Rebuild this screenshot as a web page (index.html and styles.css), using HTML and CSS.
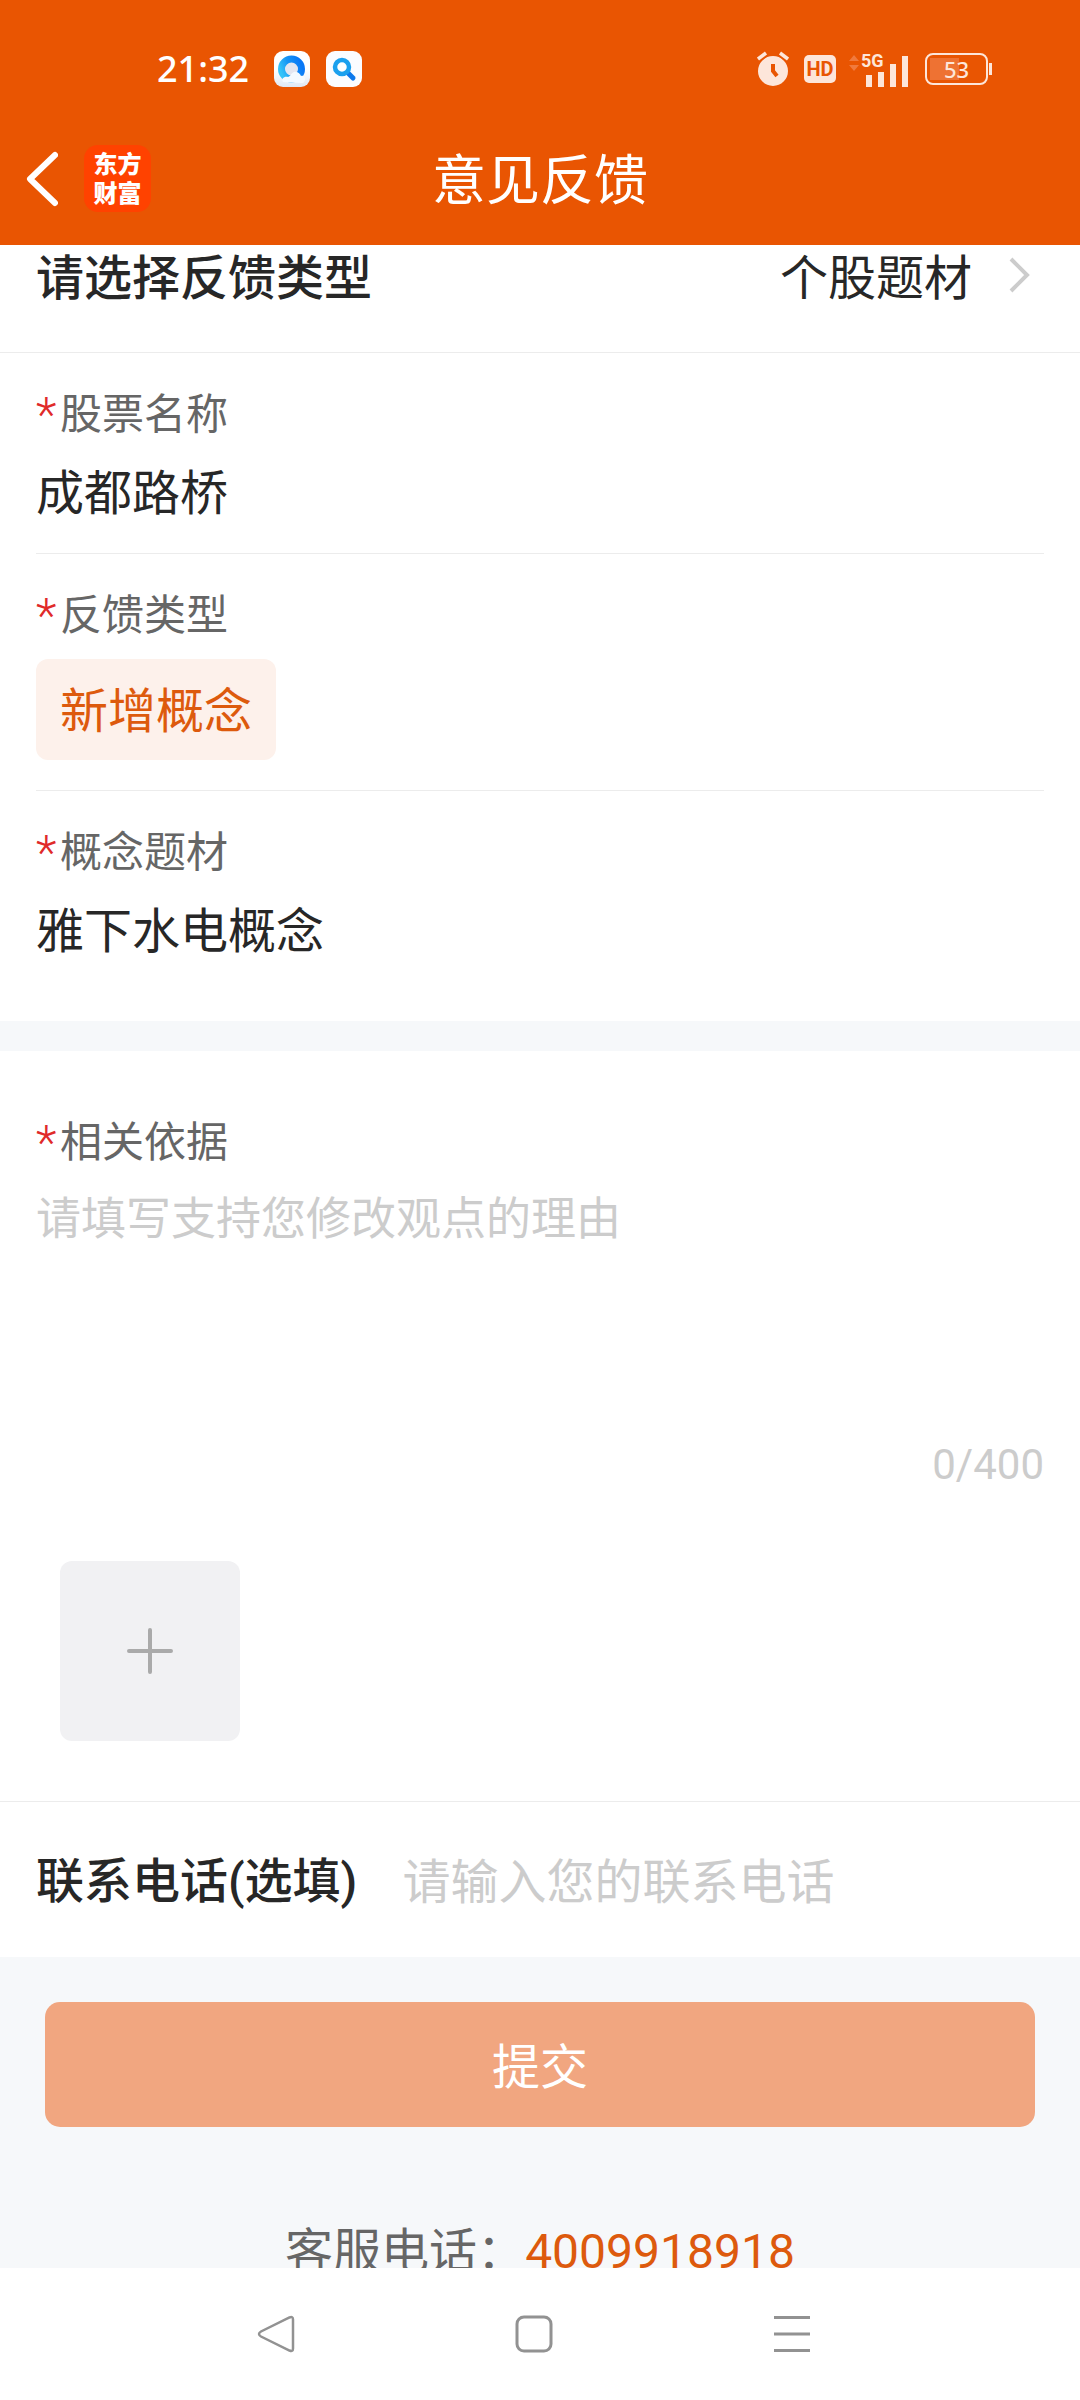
FILE: index.html
```html
<!DOCTYPE html>
<html lang="zh-CN">
<head>
<meta charset="utf-8">
<meta name="viewport" content="width=device-width, initial-scale=1">
<title>意见反馈</title>
<link rel="stylesheet" href="styles.css">
</head>
<body>
<div class="app">
  <header class="header">
    <div class="status">
      <div class="status-left">
        <span class="clock">21:32</span>
        <svg width="36" height="36" viewBox="0 0 36 36" aria-hidden="true">
          <defs>
            <linearGradient id="ring" x1="0" y1="0.7" x2="1" y2="0.3"><stop offset="0" stop-color="#35c3f8"/><stop offset="0.45" stop-color="#1796f5"/><stop offset="1" stop-color="#0a78f6"/></linearGradient>
            <linearGradient id="tile" x1="0" y1="0" x2="0" y2="1"><stop offset="0.5" stop-color="#fff"/><stop offset="1" stop-color="#dfe8f4"/></linearGradient>
          </defs>
          <rect width="36" height="36" rx="9" fill="url(#tile)"/>
          <circle cx="17.500" cy="18" r="10" fill="#e4e6f0" stroke="url(#ring)" stroke-width="7"/>
          <path d="M9 31c-2-3 1-6 5-5 2 0 3-4 6-5 4-1 6 2 7 4 3-1 4 1 4 3s-1 4-3 4z" fill="#f4faff"/>
        </svg>
        <svg width="36" height="36" viewBox="0 0 36 36" aria-hidden="true">
          <rect width="36" height="36" rx="9" fill="#fbfcff"/>
          <path d="M21 21l6 6" stroke="#0c78ec" stroke-width="5" stroke-linecap="round"/>
          <circle cx="16" cy="16" r="7" fill="#fff" stroke="#1ba0ee" stroke-width="4.500"/>
        </svg>
      </div>
      <div class="status-right">
        <svg width="32" height="36" viewBox="0 0 32 36" aria-hidden="true">
          <circle cx="16" cy="20" r="15" fill="#fde6da"/>
          <path d="M1 8l8-6M31 8l-8-6" stroke="#e95502" stroke-width="7"/>
          <path d="M1 8l8-6M31 8l-8-6" stroke="#fde6da" stroke-width="3.500"/>
          <path d="M16 13v7l4 5" fill="none" stroke="#e95502" stroke-width="4"/>
        </svg>
        <span class="hd">HD</span>
        <span class="signal">
          <svg width="62" height="36" viewBox="0 0 62 36" aria-hidden="true">
            <path d="M1 10l5-6 5 6zM1 14l5 6 5-6z" fill="#f07a3d"/>
            <path d="M18 24h6v12h-6zM30 21h6v15h-6zM42 13h6v23h-6zM54 5h6v31h-6z" fill="#fde6da"/>
          </svg>
          <span class="net">5G</span>
        </span>
        <span class="battery">53</span>
      </div>
    </div>
    <div class="titlebar">
      <div class="title-left">
        <button class="back" type="button" aria-label="返回">
          <svg width="32" height="56" viewBox="0 0 32 56"><path d="M29 4L4 28l25 24" fill="none" stroke="#fff" stroke-width="6" stroke-linecap="round" stroke-linejoin="round"/></svg>
        </button>
        <span class="logo">东方<br>财富</span>
      </div>
      <h1 class="title">意见反馈</h1>
    </div>
  </header>

  <main class="content">
    <form>
      <button class="type-row" type="button">
        <span class="strong">请选择反馈类型</span>
        <span class="type-value"><span>个股题材</span>
          <svg width="24" height="40" viewBox="0 0 24 40" aria-hidden="true"><path d="M3 3l16 16L3 35" fill="none" stroke="#ccc" stroke-width="4"/></svg>
        </span>
      </button>

      <section class="panel">
        <div class="field">
          <label class="label" for="stock"><span class="star">*</span>股票名称</label>
          <input class="value" id="stock" type="text" value="成都路桥">
        </div>
        <div class="field field-chip">
          <span class="label" id="kind"><span class="star">*</span>反馈类型</span>
          <button class="chip" type="button" aria-describedby="kind">新增概念</button>
        </div>
        <div class="field field-last">
          <label class="label" for="topic"><span class="star">*</span>概念题材</label>
          <input class="value" id="topic" type="text" value="雅下水电概念">
        </div>
      </section>

      <section class="panel reason">
        <label class="label" for="reason"><span class="star">*</span>相关依据</label>
        <textarea class="reason-text" id="reason" maxlength="400" placeholder="请填写支持您修改观点的理由"></textarea>
        <div class="counter">0/400</div>
        <button class="upload" type="button" aria-label="添加图片">
          <svg width="48" height="48" viewBox="0 0 48 48"><path d="M24 3v42M3 24h42" stroke="#aaa" stroke-width="4" stroke-linecap="round"/></svg>
        </button>
      </section>

      <div class="phone-row">
        <label class="strong" for="phone">联系电话(选填)</label>
        <input class="phone" id="phone" type="tel" placeholder="请输入您的联系电话">
      </div>

      <div class="actions">
        <button class="submit" type="submit">提交</button>
        <p class="service">客服电话：<a href="tel:4009918918">4009918918</a></p>
      </div>
    </form>
  </main>

  <nav class="sysnav">
    <button type="button" aria-label="后退"><svg width="38" height="38" viewBox="0 0 38 38"><path d="M32.500 2.500Q36 1 36 4.500v29q0 3.500-3.500 2L4 21.500q-4-2.500 0-5z" fill="none" stroke="#929292" stroke-width="2.500"/></svg></button>
    <button type="button" aria-label="主页"><svg width="38" height="38" viewBox="0 0 38 38"><rect x="2" y="2" width="34" height="34" rx="7" fill="none" stroke="#929292" stroke-width="3"/></svg></button>
    <button type="button" aria-label="最近任务"><svg width="38" height="38" viewBox="0 0 38 38"><path d="M1 2.500h36M1 19h36M1 35.500h36" stroke="#929292" stroke-width="3"/></svg></button>
  </nav>
</div>
</body>
</html>
```
FILE: styles.css
```css
* { box-sizing: border-box; }

body {
  margin: 0;
  background: #fff;
  color: #272727;
  font-family: Roboto, "Noto Sans CJK SC", sans-serif;
  font-size: 48px;
  line-height: 60px;
}

button, input, textarea {
  margin: 0;
  padding: 0;
  border: 0;
  border-radius: 0;
  background: none;
  color: inherit;
  font: inherit;
  outline: 0;
}

svg { display: block; flex: none; }

.app {
  display: flex;
  flex-direction: column;
  height: 100vh;
}

/* Header */
.header {
  flex: none;
  background: #e95502;
  color: #fff;
}

.status {
  display: flex;
  justify-content: space-between;
  align-items: center;
  height: 112px;
  padding: 26px 88px 0 157px;
}

.status-left, .status-right {
  display: flex;
  align-items: center;
  gap: 16px;
}

.clock {
  margin-right: 9px;
  font: 500 36px/48px "Noto Sans", sans-serif;
}

.status-right {
  gap: 15px;
  color: #fde6da;
}

.hd {
  width: 32px;
  border-radius: 5px;
  background: #fde6da;
  color: #e95502;
  font: 700 20px/28px Roboto, sans-serif;
  text-align: center;
}

.signal {
  position: relative;
  margin-left: -3px;
}

.net {
  position: absolute;
  top: 0;
  left: 13px;
  font: 700 18px/20px Roboto, sans-serif;
}

.battery {
  position: relative;
  width: 63px;
  height: 32px;
  margin-right: 4px;
  border: 2px solid #fde6da;
  border-radius: 8px;
  background: linear-gradient(#ee7233, #ee7233) 3px 3px / 29px 22px no-repeat;
  font: 500 22px/28px "Noto Sans", sans-serif;
  text-align: center;
}

.battery::after {
  content: "";
  position: absolute;
  top: 8px;
  right: -6px;
  width: 3px;
  height: 12px;
  background: #fde6da;
}

.titlebar {
  display: grid;
  grid-template-columns: 1fr auto 1fr;
  align-items: center;
  height: 133px;
  padding: 0 26px;
}

.title-left {
  display: flex;
  align-items: center;
  gap: 26px;
}

.logo {
  width: 67px;
  padding: 3px 0 6px;
  border-radius: 14px;
  background: #ff4200;
  font: 900 24px/29px "Noto Sans CJK SC", sans-serif;
  text-align: center;
}

.title {
  margin: 0;
  padding-top: 6px;
  font-size: 54px;
  font-weight: 400;
  line-height: 72px;
}

/* Form */
.content {
  flex: 1;
  min-height: 0;
  overflow: hidden;
  background: #f6f8fa;
}

.strong { font-weight: 500; }

.type-row {
  display: flex;
  justify-content: space-between;
  width: 100%;
  padding: 4px 48px 43px 36px;
  border-bottom: 1px solid #ececec;
  background: #fff;
}

.type-value {
  display: flex;
  gap: 36px;
}

.type-value svg { margin-top: 7px; }

.panel {
  padding: 0 36px;
  background: #fff;
}

.field {
  padding: 32px 0 30px;
  border-bottom: 1px solid #ececec;
}

.field-last {
  padding-bottom: 60px;
  border-bottom: 0;
}

.label {
  display: flex;
  color: #666;
  font-size: 42px;
}

.star {
  width: 24px;
  color: #e02a2a;
  font-size: 48px;
  font-weight: 300;
}

.value {
  display: block;
  width: 100%;
  height: 68px;
  margin-top: 10px;
}

.chip {
  display: block;
  margin-top: 13px;
  padding: 23px 24px 18px;
  border-radius: 12px;
  background: #fdf1eb;
  color: #dd5a0d;
}

.reason {
  margin-top: 30px;
  padding-top: 62px;
  padding-bottom: 60px;
  border-bottom: 1px solid #ececec;
}

.reason-text {
  display: block;
  width: 100%;
  height: 247px;
  margin-top: 15px;
  font-size: 45px;
  line-height: 64px;
  resize: none;
}

::placeholder { color: #ccc; opacity: 1; }

.counter {
  color: #ccc;
  font-size: 42px;
  text-align: right;
}

.upload {
  display: grid;
  place-items: center;
  width: 180px;
  height: 180px;
  margin: 66px 24px 0;
  border-radius: 12px;
  background: #f1f1f3;
}

.phone-row {
  display: flex;
  align-items: center;
  gap: 45px;
  padding: 48px 36px 43px;
  background: #fff;
}

.phone {
  flex: 1;
  min-width: 0;
  height: 64px;
}

.actions { padding: 45px; }

.submit {
  display: block;
  width: 100%;
  padding: 36px 0 29px;
  border-radius: 15px;
  background: #f1a680;
  color: #fff;
}

.service {
  margin: 95px 0 0;
  color: #666;
  text-align: center;
}

.service a {
  color: #dd5a0d;
  text-decoration: none;
}

/* System navigation */
.sysnav {
  display: flex;
  flex: none;
  justify-content: center;
  gap: 220px;
  padding: 47px 12px 47px 0;
  background: #fff;
}
```
